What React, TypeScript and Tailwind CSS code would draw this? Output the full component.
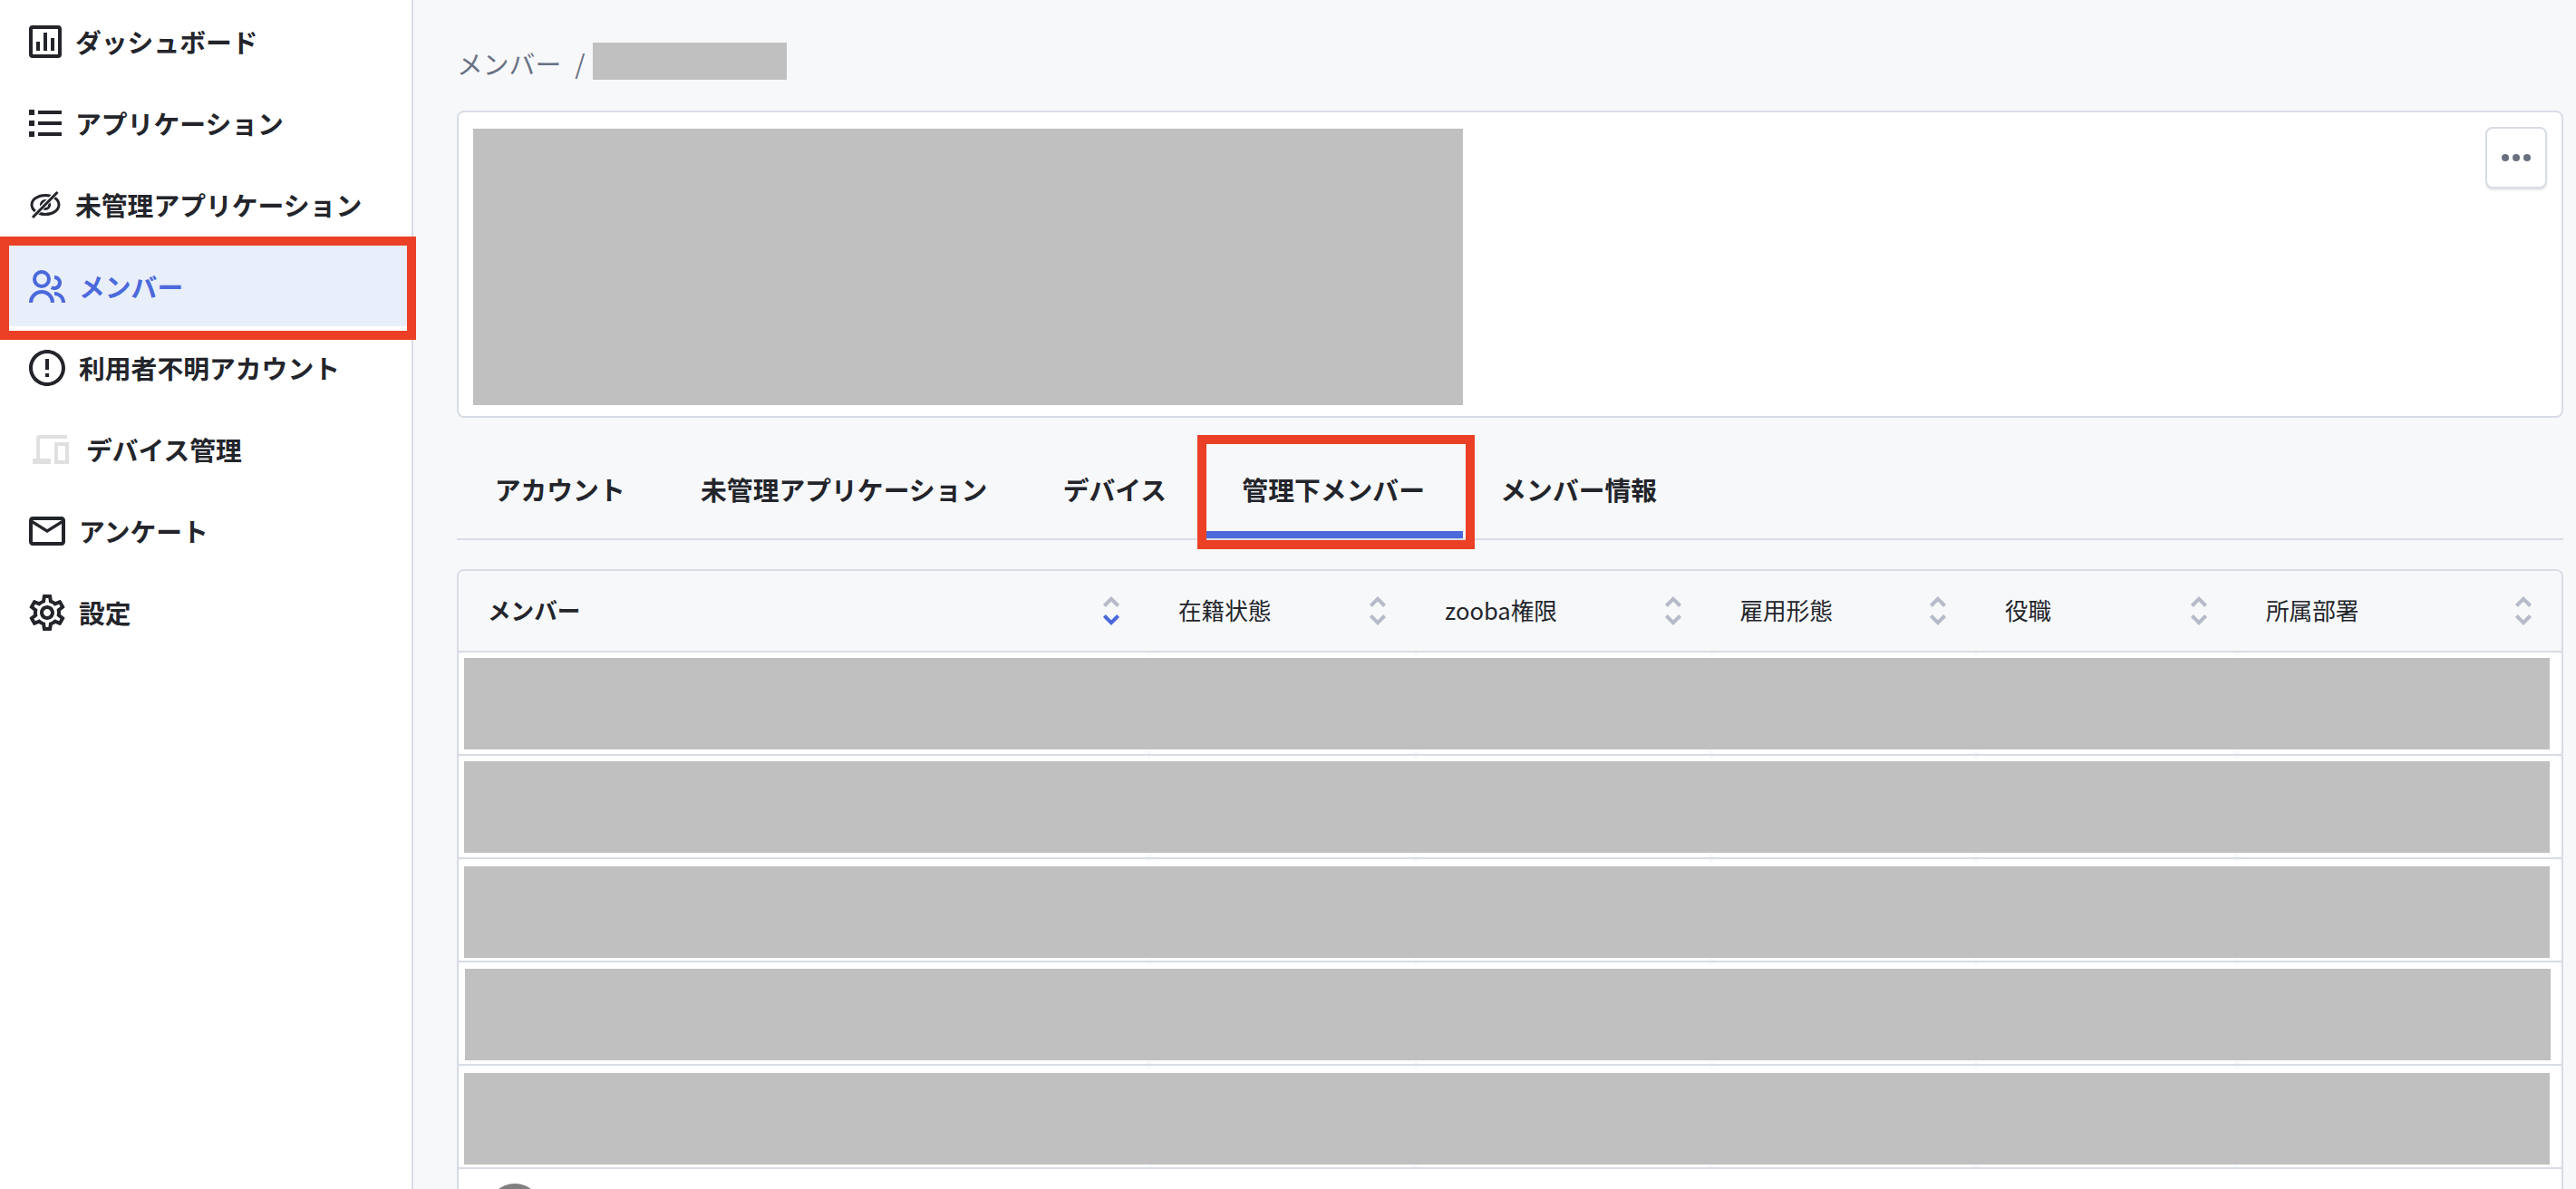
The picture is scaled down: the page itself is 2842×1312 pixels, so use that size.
import { MdMailOutline, MdOutlineSettings } from "react-icons/md";
import { RiErrorWarningLine } from "react-icons/ri";
import clsx from "clsx";

const navItems = [
  { label: "ダッシュボード", icon: <ChartIcon />, gap: "pl-[26px] gap-[9px]" },
  { label: "アプリケーション", icon: <ListIcon />, gap: "pl-[26px] gap-[9px]" },
  { label: "未管理アプリケーション", icon: <EyeOffIcon />, gap: "pl-[26px] gap-[9px]" },
  { label: "メンバー", icon: <MembersIcon />, gap: "pl-7 gap-[11px]", active: true },
  { label: "利用者不明アカウント", icon: <RiErrorWarningLine size={48} />, gap: "pl-7 gap-[11px]" },
  { label: "デバイス管理", icon: <DevicesIcon />, gap: "pl-8 gap-[15px]" },
  { label: "アンケート", icon: <MdMailOutline size={48} />, gap: "pl-7 gap-[11px]" },
  { label: "設定", icon: <MdOutlineSettings size={48} />, gap: "pl-7 gap-[11px]" }
];

const tabs = [
  { label: "アカウント" },
  { label: "未管理アプリケーション" },
  { label: "デバイス" },
  { label: "管理下メンバー", active: true },
  { label: "メンバー情報" }
];

const columns = [
  { label: "メンバー", sorted: true },
  { label: "在籍状態" },
  { label: "zooba権限" },
  { label: "雇用形態" },
  { label: "役職" },
  { label: "所属部署" }
];

const rows = [
  "pt-1.5 pl-1.5",
  "pt-1.5 pl-1.5",
  "pt-2 pl-1.5",
  "pt-[7px] pl-[7px]",
  "pt-2 pl-1.5"
];

const gridCols = "grid grid-cols-[762px_294px_325.5px_292.5px_288px_1fr]";

export default function App() {
  return (
    <div className="flex h-[1312px] w-[2842px] overflow-hidden bg-[#f7f8fa] font-['Noto_Sans_CJK_JP',sans-serif] text-[#23252b]">
      <Sidebar />
      <main className="flex flex-1 flex-col pl-12 pr-3.5">
        <Breadcrumb />
        <section className="flex h-[339px] shrink-0 items-start justify-between rounded-lg border-2 border-[#d8dce6] bg-white px-4 pt-4">
          <div className="mt-0.5 h-[305px] w-[1092px] bg-[#c0c0c0]" />
          <button
            aria-label="メニュー"
            className="flex size-[68px] items-center justify-center rounded-lg border-2 border-[#d8dce6] bg-white shadow-[0_2px_2px_rgba(0,0,0,0.1)]"
          >
            <svg width="32" height="8" viewBox="0 0 32 8" fill="#687080">
              <circle cx="4" cy="4" r="4" />
              <circle cx="16" cy="4" r="4" />
              <circle cx="28" cy="4" r="4" />
            </svg>
          </button>
        </section>
        <Tabs />
        <MemberTable />
      </main>
    </div>
  );
}

function Sidebar() {
  return (
    <nav className="w-[456px] shrink-0 border-r-2 border-[#d9dce7] bg-white">
      {navItems.map((item) => (
        <a
          key={item.label}
          className={clsx(
            "relative flex h-[90px] items-center text-[28.8px] font-bold",
            item.gap,
            item.active && "bg-[#e8eefa] text-[#4b69db]"
          )}
        >
          <span className="mt-0.5 size-12 shrink-0">{item.icon}</span>
          <span className="mt-0.5 whitespace-nowrap">{item.label}</span>
          {item.active && (
            <span className="absolute -top-[9px] left-0 z-10 h-[114px] w-[459px] border-10 border-[#eb4026]" />
          )}
        </a>
      ))}
    </nav>
  );
}

function Breadcrumb() {
  return (
    <div className="flex h-[122px] shrink-0 items-start text-[28.8px] text-[#687083]">
      <span className="mt-12 leading-[43px]">メンバー</span>
      <span className="mt-12 ml-[15px] leading-[43px]">/</span>
      <span className="mt-[47px] ml-[8px] h-[41px] w-[214px] bg-[#c0c0c0]" />
    </div>
  );
}

function Tabs() {
  return (
    <div className="mt-6 flex h-[111px] shrink-0 border-b-2 border-[#d8dce6]">
      {tabs.map((tab) => (
        <div
          key={tab.label}
          className={clsx(
            "relative flex items-center px-[41.7px] text-[28.8px] font-bold",
            tab.active && "shadow-[inset_0_-8px_0_#4b69db]"
          )}
        >
          {tab.label}
          {tab.active && (
            <span className="absolute -top-[5px] -left-2 h-[126px] w-[306px] border-10 border-[#eb4026]" />
          )}
        </div>
      ))}
    </div>
  );
}

function MemberTable() {
  return (
    <div className="mt-8 flex-1 overflow-hidden rounded-t-lg border-2 border-b-0 border-[#d8dce6] bg-white">
      <div className={clsx(gridCols, "h-[90px] border-b-2 border-[#d8dce6] bg-[#f7f8fa]")}>
        {columns.map((col) => (
          <div
            key={col.label}
            className={clsx(
              "flex items-center justify-between px-8 text-[25.6px]",
              col.sorted && "font-bold"
            )}
          >
            <span className="mb-0.5">{col.label}</span>
            <SortIcon sorted={col.sorted} />
          </div>
        ))}
      </div>
      {rows.map((pad, i) => (
        <div key={i} className={clsx("relative h-[114px] border-b-2 border-[#d8dce6]", pad)}>
          <CellCorners />
          <div className="relative h-[101px] w-[2301px] bg-[#c0c0c0]" />
        </div>
      ))}
      <div className="pt-4 pl-8">
        <div className="size-[60px] rounded-full bg-[#808080]" />
      </div>
    </div>
  );
}

/* rounded cells leave a faint tint where the columns meet */
function CellCorners() {
  return (
    <div className={clsx(gridCols, "absolute inset-0 bg-[#f7f8fa]")}>
      {columns.map((col) => (
        <span key={col.label} className="rounded-md bg-white" />
      ))}
    </div>
  );
}

function SortIcon({ sorted }: { sorted?: boolean }) {
  return (
    <svg width="20" height="32" viewBox="0 0 20 32" fill="none" strokeWidth="4">
      <path d="M2.4 10.5 10 2.9l7.6 7.6" stroke="#b5bbc9" />
      <path d="m2.4 21.5 7.6 7.6 7.6-7.6" stroke={sorted ? "#4b69db" : "#b5bbc9"} />
    </svg>
  );
}

function ChartIcon() {
  return (
    <svg width="48" height="48" viewBox="0 0 24 24" fill="currentColor">
      <rect x="4" y="4" width="16" height="16" rx="1" fill="none" stroke="currentColor" strokeWidth="2" />
      <path d="M7 12h2v5H7zM11 7h2v10h-2zM15 10h2v7h-2z" />
    </svg>
  );
}

function ListIcon() {
  return (
    <svg width="48" height="48" viewBox="0 0 24 24" fill="currentColor">
      <path d="M3 4.5h3v3H3zM3 10.5h3v3H3zM3 16.5h3v3H3zM8 5h13v2H8zM8 11h13v2H8zM8 17h13v2H8z" />
    </svg>
  );
}

function EyeOffIcon() {
  return (
    <svg width="48" height="48" viewBox="0 0 48 48" fill="none" stroke="currentColor" strokeWidth="3">
      <ellipse cx="24" cy="24" rx="15" ry="10.5" />
      <circle cx="24" cy="24" r="4.6" strokeWidth="3" />
      <path d="M39 8 8 39.5" stroke="#fff" strokeWidth="5.2" />
      <path d="M37.5 10 10 38" strokeWidth="3" />
    </svg>
  );
}

function MembersIcon() {
  return (
    <svg width="48" height="48" viewBox="0 0 24 24" fill="none" stroke="currentColor" strokeWidth="2">
      <circle cx="9" cy="8" r="4" />
      <path d="M3 21a6 6 0 0 1 12 0M16 7a3 3 0 1 1-1.6 5.54M16 16a5 5 0 0 1 5 5" />
    </svg>
  );
}

function DevicesIcon() {
  return (
    <svg width="48" height="48" viewBox="0 0 24 24" fill="none" stroke="#e0e0e0" strokeWidth="2">
      <path d="M21 5H6a1 1 0 0 0-1 1v11" />
      <path d="M2 18.5h10" strokeWidth="3" />
      <rect x="15" y="9" width="6" height="10" />
    </svg>
  );
}
